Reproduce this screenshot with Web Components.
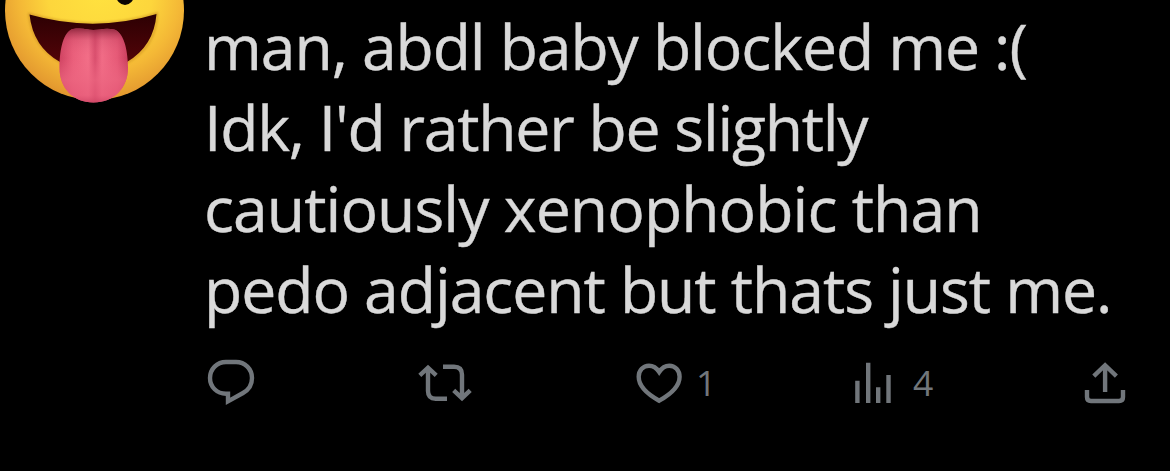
<!DOCTYPE html>
<html lang="en">
<head>
<meta charset="utf-8">
<title>Post</title>
<style>
  body {
    margin: 0;
    background: #000;
    overflow: hidden;
  }
</style>
</head>
<body>
<post-card>
  <post-avatar slot="avatar"></post-avatar>
  <post-line style="letter-spacing: -1.09px">man, abdl baby blocked me :(</post-line>
  <post-line style="letter-spacing: -1.24px">Idk, I'd rather be slightly</post-line>
  <post-line style="letter-spacing: -0.93px">cautiously xenophobic than</post-line>
  <post-line style="letter-spacing: -1.06px">pedo adjacent but thats just me.</post-line>
  <post-action slot="actions" icon="reply"></post-action>
  <post-action slot="actions" icon="repost"></post-action>
  <post-action slot="actions" icon="like">1</post-action>
  <post-action slot="actions" icon="views">4</post-action>
  <post-action slot="actions" icon="share"></post-action>
</post-card>

<script>
/* post layout: avatar on the left, text and action bar on the right */
class PostCard extends HTMLElement {
  constructor() {
    super();
    this.attachShadow({ mode: 'open' });
  }

  connectedCallback() {
    this.shadowRoot.innerHTML = `
      <style>
        :host {
          display: flex;
          height: 471px;
          background: #000;
          overflow: hidden;
        }

        .side {
          flex: none;
          width: 201px;
        }

        .main {
          flex: 1;
          min-width: 0;
          padding-top: 5px;
        }

        /* thin stroke makes the letters slightly heavier */
        .text {
          padding-left: 3px;
          color: #d9d9d9;
          font: 460 62.5px/81px "Open Sans", "Noto Sans", sans-serif;
          -webkit-text-stroke: 0.4px #d9d9d9;
        }

        /* the last column only needs room for its icon */
        .actions {
          display: grid;
          grid-template-columns: 215px 220px 215px 225px auto;
          margin-top: 21px;
        }
      </style>
      <div class="side"><slot name="avatar"></slot></div>
      <div class="main">
        <div class="text"><slot></slot></div>
        <div class="actions"><slot name="actions"></slot></div>
      </div>
    `;
  }
}

/* one line of the post */
class PostLine extends HTMLElement {
  constructor() {
    super();
    this.attachShadow({ mode: 'open' });
  }

  connectedCallback() {
    this.shadowRoot.innerHTML = `
      <style>
        :host {
          display: block;
          white-space: nowrap;
        }
      </style>
      <slot></slot>
    `;
  }
}

/* emoji with its tongue out, cut off by the top of the page */
class PostAvatar extends HTMLElement {
  constructor() {
    super();
    this.attachShadow({ mode: 'open' });
  }

  connectedCallback() {
    this.shadowRoot.innerHTML = `
      <style>
        :host {
          display: block;
        }

        svg {
          display: block;
        }
      </style>
      <svg width="200" height="115" viewBox="0 0 200 115">
        <defs>
          <radialGradient id="face" gradientUnits="userSpaceOnUse" cx="100" cy="-8" r="116">
            <stop offset="0" stop-color="#ffe23f"/>
            <stop offset=".45" stop-color="#fdd63c"/>
            <stop offset=".7" stop-color="#f4b836"/>
            <stop offset=".9" stop-color="#e59c30"/>
            <stop offset="1" stop-color="#d98a28"/>
          </radialGradient>
          <linearGradient id="mouth" x1="0" y1="0" x2="0" y2="1">
            <stop offset="0" stop-color="#2c0003"/>
            <stop offset="1" stop-color="#520408"/>
          </linearGradient>
          <linearGradient id="tongue" x1="0" y1="0" x2="1" y2="0">
            <stop offset="0" stop-color="#cf4261"/>
            <stop offset=".2" stop-color="#ea5f7b"/>
            <stop offset=".42" stop-color="#f26e87"/>
            <stop offset=".52" stop-color="#d94e6d"/>
            <stop offset=".62" stop-color="#f16c86"/>
            <stop offset=".84" stop-color="#e65a77"/>
            <stop offset="1" stop-color="#c83d5c"/>
          </linearGradient>
          <linearGradient id="shade" x1="0" y1="0" x2="0" y2="1">
            <stop offset="0" stop-color="#7d1c32" stop-opacity=".8"/>
            <stop offset=".16" stop-color="#b03552" stop-opacity=".2"/>
            <stop offset=".4" stop-color="#f06a85" stop-opacity="0"/>
            <stop offset=".7" stop-color="#ec6580" stop-opacity=".7"/>
            <stop offset=".9" stop-color="#e65a78" stop-opacity=".6"/>
            <stop offset="1" stop-color="#d04666" stop-opacity=".9"/>
          </linearGradient>
          <filter id="soft"><feGaussianBlur stdDeviation="1.2"/></filter>
        </defs>
        <circle cx="94.5" cy="10.5" r="89.5" fill="url(#face)"/>
        <ellipse cx="125" cy="-5" rx="9" ry="10" fill="#0a0503"/>
        <path d="M29 14Q94 33 157 13.500Q156 47 127 62.500H61Q32 47 29 14Z" fill="none" stroke="#b97918" stroke-width="2" opacity=".5" filter="url(#soft)"/>
        <path d="M29.500 14.500Q94 33 156.500 14Q154 46 127 62H60Q33 47 29.500 14.500Z" fill="url(#mouth)"/>
        <path d="M73 29C83 27.500 87 30 93.500 30C100 30 105 27.500 114 29.500C123 32 128 48 128 68C128 88 114 102.500 93.500 102.500C73 102.500 59.500 88 59.500 68C59.500 48 64 31 73 29Z" fill="url(#tongue)"/>
        <path d="M73 29C83 27.500 87 30 93.500 30C100 30 105 27.500 114 29.500C123 32 128 48 128 68C128 88 114 102.500 93.500 102.500C73 102.500 59.500 88 59.500 68C59.500 48 64 31 73 29Z" fill="url(#shade)"/>
      </svg>
    `;
  }
}

const ICONS = {
  reply: {
    width: 80,
    body: '<path d="M31 12H41C50 12 57 19 57 28C57 35 53.500 40 48 43L33 51.300V43.700H31C22 43.700 15 37 15 28C15 19 22 12 31 12Z"/>'
  },
  repost: {
    width: 80,
    body: '<path d="M9.800 25.300L18 17.700L26.200 25.300M18 18V41Q18 48.700 25.700 48.700H37M33 16.700H44Q52 16.700 52 24.700V48M43.700 40.300L52 48.200L60.200 40.300"/>'
  },
  like: {
    width: 66,
    body: '<path d="M29.200 22C26.500 17.800 22.800 15.700 19 15.700C13.300 15.700 8.700 20.300 8.700 26.800C8.700 36.500 17 44 29.200 50.700C41.300 44 49.600 36.500 49.600 26.800C49.600 20.300 45 15.700 39.300 15.700C35.500 15.700 31.900 17.800 29.200 22Z"/>'
  },
  views: {
    width: 68,
    body: '<path d="M12.400 30.700V53M23.200 12.700V53M33.200 37.300V53M43.500 25V53"/>'
  },
  share: {
    width: 80,
    body: '<path d="M23.800 26.200L35.100 15.200L46.400 26.200M35.100 16V42M17 40V47Q17 51 21 51H49Q53 51 53 47V40"/>'
  }
};

/* icon button with an optional count */
class PostAction extends HTMLElement {
  constructor() {
    super();
    this.attachShadow({ mode: 'open' });
  }

  connectedCallback() {
    const icon = ICONS[this.getAttribute('icon')];
    this.shadowRoot.innerHTML = `
      <style>
        :host {
          display: flex;
          align-items: center;
          height: 65px;
          margin-left: -6px;
          color: #71767b;
          font: 400 35.5px/65px "Open Sans", "Noto Sans", sans-serif;
        }

        svg {
          display: block;
          flex: none;
        }

        path {
          fill: none;
          stroke: currentColor;
          stroke-width: 4.4;
        }
      </style>
      <svg width="${icon.width}" height="65" viewBox="0 0 ${icon.width} 65">${icon.body}</svg>
      <span><slot></slot></span>
    `;
  }
}

customElements.define('post-card', PostCard);
customElements.define('post-line', PostLine);
customElements.define('post-avatar', PostAvatar);
customElements.define('post-action', PostAction);
</script>
</body>
</html>
